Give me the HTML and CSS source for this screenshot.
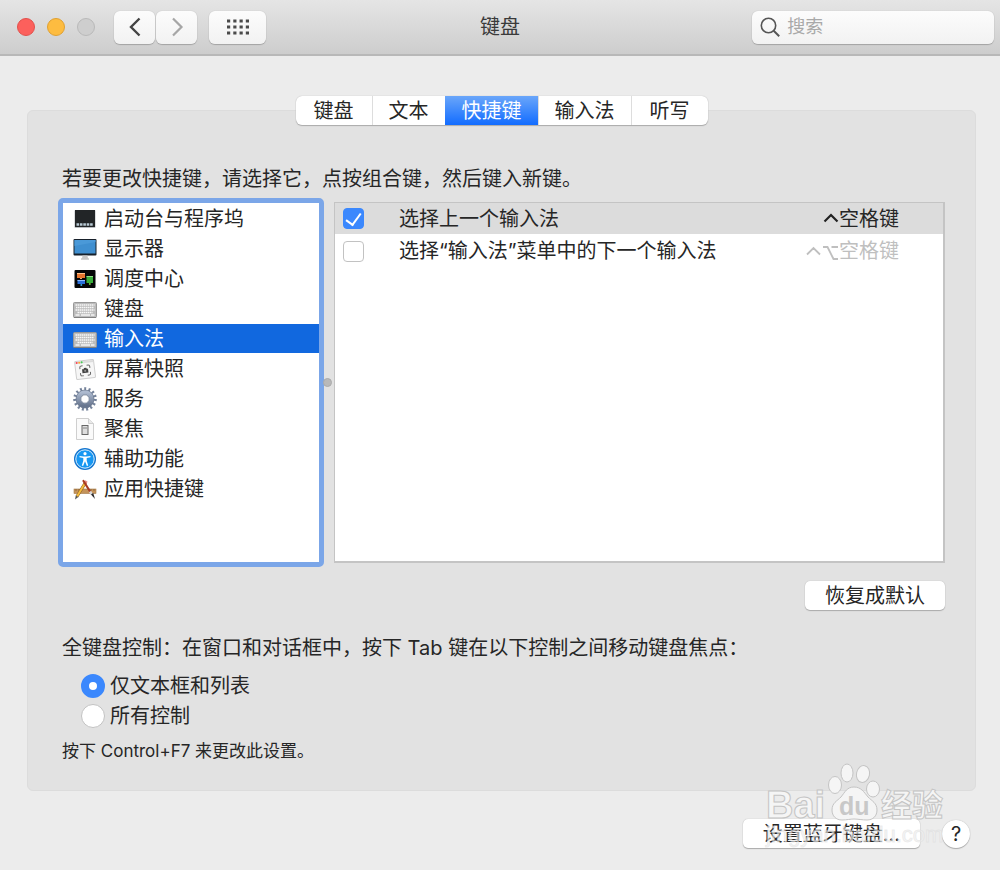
FILE: index.html
```html
<!DOCTYPE html>
<html lang="zh-CN">

<head>
    <meta charset="UTF-8">
    <meta name="viewport" content="width=device-width, initial-scale=1.0">
    <title>键盘</title>
    <link rel="stylesheet" href="styles.css">
</head>

<body>
    <header class="toolbar">
        <div class="toolbar-left">
            <div class="lights">
                <button class="light red" aria-label="关闭"></button>
                <button class="light yellow" aria-label="最小化"></button>
                <button class="light off" aria-label="缩放" disabled></button>
            </div>
            <div class="nav">
                <button class="tool" aria-label="后退">
                    <svg width="14" height="20" viewBox="0 0 14 20"><path d="M11.500 1.500L3 10l8.500 8.500" fill="none" stroke="#444" stroke-width="2.400"/></svg>
                </button>
                <button class="tool" aria-label="前进">
                    <svg width="14" height="20" viewBox="0 0 14 20"><path d="M3 1.500L11.500 10 3 18.500" fill="none" stroke="#a6a6a6" stroke-width="2.200"/></svg>
                </button>
            </div>
            <button class="tool all" aria-label="显示全部">
                <svg width="22" height="16" viewBox="0 0 22 16"><path d="M0 2h22M0 8h22M0 14h22" stroke="#4a4a4a" stroke-width="3.200" stroke-dasharray="3.200 3.070"/></svg>
            </button>
        </div>
        <h1 class="title">键盘</h1>
        <label class="search">
            <svg width="20" height="20" viewBox="0 0 20 20"><circle cx="8.500" cy="8.500" r="7.200" fill="none" stroke="#555" stroke-width="1.600"/><path d="M13.700 13.700l5.500 5.500" stroke="#555" stroke-width="2"/></svg>
            <input type="text" placeholder="搜索" aria-label="搜索">
        </label>
    </header>

    <main class="content">
        <nav class="tabs">
            <button class="tab">键盘</button>
            <button class="tab">文本</button>
            <button class="tab on">快捷键</button>
            <button class="tab">输入法</button>
            <button class="tab">听写</button>
        </nav>

        <section class="panel">
            <p class="intro">若要更改快捷键，请选择它，点按组合键，然后键入新键。</p>

            <div class="split">
                <ul class="list">
                    <li><button class="item">
                        <svg class="icon" viewBox="0 0 24 24"><rect x="1.500" y="3" width="21" height="18" rx="1" fill="#b8bcc0"/><rect x="2" y="3" width="20" height="17" fill="#222527"/><path d="M3.500 17.500h17" stroke="#b9cad5" stroke-width="2.400" stroke-dasharray="2.600 .8"/></svg>
                        启动台与程序坞
                    </button></li>
                    <li><button class="item">
                        <svg class="icon" viewBox="0 0 24 24"><rect x=".5" y="2" width="23" height="16.500" rx="1" fill="#17202a"/><rect x="1.500" y="3" width="21" height="13.500" fill="#3f8fd0"/><path d="M1.500 3h21v2L1.500 9z" fill="#4a99d8"/><path d="M9.500 18.500h5l.5 3h-6z" fill="#c7c7c7"/><path d="M8 22h8" stroke="#aaa"/></svg>
                        显示器
                    </button></li>
                    <li><button class="item">
                        <svg class="icon" viewBox="0 0 24 24"><rect x="1.500" y="3" width="21" height="18" rx="1" fill="#050607"/><rect x="4" y="6" width="8" height="5" fill="#e5752e"/><path d="M4 6.500h8" stroke="#ffc08a"/><rect x="13.500" y="9" width="6.500" height="7" fill="#38ad39"/><path d="M13.500 9.500H20" stroke="#8fe08a"/><rect x="4.500" y="13" width="7.500" height="4" fill="#2a6ed9"/><path d="M4.500 13.500H12" stroke="#8dbcff"/><path d="M7 11.500h2" stroke="#e8a56b"/><circle cx="8.300" cy="18" r="1" fill="#35a6dd"/><circle cx="16.800" cy="17" r="1" fill="#71c93a"/></svg>
                        调度中心
                    </button></li>
                    <li><button class="item">
                        <svg class="icon" viewBox="0 0 24 24"><use href="#kb"/></svg>
                        键盘
                    </button></li>
                    <li><button class="item on">
                        <svg class="icon" viewBox="0 0 24 24">
                            <g id="kb"><rect x=".5" y="5.500" width="23" height="15" rx="1" fill="#bcbcbc" stroke="#999"/><path d="M1 20.500h22" stroke="#808080"/><path d="M2.500 8h19M2.500 13h19M4.500 15.500h15" stroke="#f8f8f8" stroke-width="1.600" stroke-dasharray="1.500 .5"/><path d="M3 10.500h18" stroke="#f8f8f8" stroke-width="1.600" stroke-dasharray="1.500 .5"/><path d="M2.500 18h4M8 18h9M18 18h3.500" stroke="#f4f4f4" stroke-width="1.400"/></g>
                        </svg>
                        输入法
                    </button></li>
                    <li><button class="item">
                        <svg class="icon" viewBox="0 0 24 24"><g transform="rotate(-7 12 12)"><rect x="2.500" y="3.500" width="19" height="18" rx="1" fill="#f6f6f6" stroke="#cfcfcf"/><path d="M3 5h18" stroke="#dcdcdc" stroke-width="2"/><circle cx="4.500" cy="5" r="1" fill="#f45"/><circle cx="7" cy="5" r="1" fill="#fa3"/><circle cx="9.500" cy="5" r="1" fill="#4c5"/><path d="M7 11.500V10q0-1.500 1.500-1.500H10M14 8.500h1.500Q17 8.500 17 10v1.500M17 15.500V17q0 1.500-1.500 1.500H14M10 18.500H8.500Q7 18.500 7 17v-1.500" fill="none" stroke="#666"/><path d="M9 12h1.500l.7-1h2l.7 1H15v4H9z" fill="#444"/><circle cx="12" cy="13.800" r="1" fill="#999"/></g></svg>
                        屏幕快照
                    </button></li>
                    <li><button class="item">
                        <svg class="icon" viewBox="0 0 24 24">
                            <defs><linearGradient id="steel" x2="0" y2="1"><stop stop-color="#aebbd0"/><stop offset="1" stop-color="#68768f"/></linearGradient></defs>
                            <circle cx="12" cy="12" r="10" fill="none" stroke="#74829a" stroke-width="3.600" stroke-dasharray="1.900 2.288"/><circle cx="12" cy="12" r="6.700" fill="none" stroke="url(#steel)" stroke-width="4.800"/><circle cx="12" cy="12" r="9" fill="none" stroke="#66748b" stroke-width=".7"/><circle cx="12" cy="12" r="4.200" fill="#fff" stroke="#66758b" stroke-width=".8"/>
                        </svg>
                        服务
                    </button></li>
                    <li><button class="item">
                        <svg class="icon" viewBox="0 0 24 24"><path d="M3.500 1.500h12l5 5v16h-17z" fill="#fafafa" stroke="#cfcfcf"/><path d="M15.500 1.500v5h5" fill="#e9e9e9" stroke="#cfcfcf"/><rect x="9" y="8.500" width="6" height="9" fill="#ddd" stroke="#666"/><path d="M10 11h4" stroke="#888"/></svg>
                        聚焦
                    </button></li>
                    <li><button class="item">
                        <svg class="icon" viewBox="0 0 24 24"><circle cx="12" cy="12" r="11" fill="#1375cf"/><circle cx="12" cy="12" r="9.200" fill="#1797f2" stroke="#d9efff"/><circle cx="12" cy="6.700" r="1.600" fill="#fff"/><path d="M6.500 9l4 .6h3l4-.6v1.300l-3.800.8v2.700l1.500 4.700-1.300.5-1.900-4.800-1.900 4.800-1.300-.5 1.500-4.700v-2.700l-3.800-.8z" fill="#fff"/></svg>
                        辅助功能
                    </button></li>
                    <li><button class="item">
                        <svg class="icon" viewBox="0 0 24 24"><rect x="1" y="12" width="22" height="4.500" fill="#c4935a" stroke="#a47a48" stroke-width=".6"/><path d="M3 12v2M6 12v2M18 12v2M21 12v2" stroke="#7b5a34" stroke-width=".7"/><path d="M12.800 5L4 19.500" stroke="#8a5c22" stroke-width="3"/><path d="M12.600 5.200L4 19.500" stroke="#f5bd3e" stroke-width="2"/><path d="M2 22.500l.8-4 2.500 1.600z" fill="#555"/><path d="M12.300 6l1.200-2" stroke="#e88b82" stroke-width="2.600"/><path d="M10.500 4l7.500 12" stroke="#a83b23" stroke-width="2.200" stroke-linecap="round"/><path d="M17 14.500l1.800 2.800" stroke="#d7d7d7" stroke-width="2.600"/><path d="M18 17.500l2.200-1.400 1.800 6z" fill="#29282b"/></svg>
                        应用快捷键
                    </button></li>
                </ul>
                <div class="divider"><span class="grip"></span></div>
                <div class="detail">
                    <table class="keys">
                        <tr class="on">
                            <td class="check"><input type="checkbox" id="prev" checked></td>
                            <td><label for="prev">选择上一个输入法</label></td>
                            <td class="combo"><svg width="16" height="16" viewBox="0 0 16 16"><path d="M1.500 9.500L8 3l6.500 6.500" fill="none" stroke="#222" stroke-width="2.200"/></svg>空格键</td>
                        </tr>
                        <tr>
                            <td class="check"><input type="checkbox" id="next"></td>
                            <td><label for="next">选择“输入法”菜单中的下一个输入法</label></td>
                            <td class="combo dim"><svg width="34" height="16" viewBox="0 0 34 16"><path d="M2 9.500L8.500 3l6.500 6.500M18 2h4.500l6 12H33M26.500 2H33" fill="none" stroke="#bfbfbf" stroke-width="1.800"/></svg>空格键</td>
                        </tr>
                    </table>
                </div>
            </div>

            <div class="restore"><button class="push">恢复成默认</button></div>

            <fieldset class="access">
                <legend>全键盘控制：在窗口和对话框中，按下 Tab 键在以下控制之间移动键盘焦点：</legend>
                <label class="choice"><input type="radio" name="focus" checked>仅文本框和列表</label>
                <label class="choice"><input type="radio" name="focus">所有控制</label>
            </fieldset>
            <p class="hint">按下 Control+F7 来更改此设置。</p>
        </section>

        <footer class="bottom">
            <button class="push">设置蓝牙键盘...</button>
            <button class="help" aria-label="帮助">?</button>
            <svg class="mark" width="190" height="90" viewBox="0 0 190 90">
                <g class="mark-shape">
                    <text class="mark-bai" x="2" y="58">Bai</text>
                    <ellipse cx="71" cy="25" rx="6.500" ry="8.500"/>
                    <ellipse cx="83" cy="13" rx="6" ry="9"/>
                    <ellipse cx="99" cy="14" rx="6.500" ry="8.500" transform="rotate(12 99 14)"/>
                    <ellipse cx="109" cy="29" rx="6.500" ry="8"/>
                    <path d="M90 27c-7 0-9 5-13 10-4 4-9 6-9 13 0 6 4 10 10 10 5 0 8-1 12-1s8 1 13 1c6 0 10-4 10-10 0-7-5-9-9-13-4-5-7-10-14-10z"/>
                    <text class="mark-cn" x="117" y="56">经验</text>
                </g>
                <text class="mark-du" x="75" y="55">du</text>
                <text class="mark-url" x="2" y="82">jingyan.baidu.com</text>
            </svg>
        </footer>
    </main>
</body>

</html>
```

FILE: styles.css
```css
* {
    margin: 0;
    padding: 0;
    box-sizing: border-box;
}
body {
    display: flex;
    flex-direction: column;
    min-height: 100vh;
    background: #ececec;
    color: #262626;
    font: 20px/30px Inter, "Noto Sans CJK SC", sans-serif;
}
button, input {
    font: inherit;
    color: inherit;
    border: none;
    background: none;
}
svg {
    display: block;
    flex: none;
}

/* toolbar */
.toolbar {
    display: grid;
    grid-template-columns: 1fr auto 1fr;
    align-items: center;
    height: 56px;
    padding: 0 6px;
    background: linear-gradient(#e5e5e5, #cdcdcd);
    border-bottom: 2px solid #b8b8b8;
}
.toolbar-left {
    display: flex;
    align-items: center;
    padding-left: 11px;
}
.lights {
    display: flex;
    gap: 12px;
    margin-right: 19px;
}
.light {
    width: 18px;
    height: 18px;
    border-radius: 50%;
    border: 1px solid #b9b9b9;
}
.red {
    background: #fc605c;
    border-color: #e2504b;
}
.yellow {
    background: #fdbc40;
    border-color: #e0a030;
}
.off {
    background: #cecece;
}
.nav {
    display: flex;
    gap: 1px;
    margin-right: 12px;
}
.tool, .search {
    display: flex;
    align-items: center;
    justify-content: center;
    height: 33px;
    border-radius: 6px;
    background: linear-gradient(#fcfcfc, #f2f2f2);
    box-shadow: 0 1px 1px #a4a4a4, 0 0 1px #aaa;
}
.tool {
    width: 41px;
}
.all {
    width: 57px;
}
.title {
    font-size: 20px;
    font-weight: 400;
    color: #3a3a3a;
}
.search {
    justify-self: end;
    justify-content: flex-start;
    gap: 7px;
    width: 51%;
    padding-left: 8px;
}
.search input {
    flex: 1;
    min-width: 0;
    height: 30px;
    font-size: 18px;
    outline: none;
}
.search input::placeholder {
    color: #a9a9a9;
}

/* tabs */
.content {
    padding: 40px 24px 20px 27px;
}
.tabs {
    position: relative;
    z-index: 1;
    display: flex;
    width: max-content;
    margin: 0 auto;
    height: 29px;
    border-radius: 6px;
    background: #fff;
    box-shadow: 0 1px 1px #aaa, 0 0 1px #aaa;
}
.tab {
    padding: 0 16px;
    line-height: 28px;
    border-left: 1px solid #ddd;
}
.tab:first-child, .tab:last-child {
    padding: 0 18px;
}
.tab:first-child {
    border-left: none;
}
.tab.on {
    color: #fff;
    border-color: transparent;
    background: linear-gradient(#6aa6fa, #126cff) border-box;
}

/* panel */
.panel {
    margin-top: -15px;
    padding: 53px 30px 24px 30px;
    background: #e2e2e2;
    border: 1px solid #dcdcdc;
    border-radius: 6px;
}
.intro {
    padding-left: 4px;
}
.split {
    display: flex;
    margin-top: 4px;
}
.list {
    flex: 0 1 266px;
    height: 369px;
    padding-top: 1px;
    list-style: none;
    background: #fff;
    border: 5px solid #7ba6e8;
    border-radius: 5px;
}
.item {
    display: flex;
    align-items: center;
    gap: 7px;
    width: 100%;
    height: 29px;
    margin-bottom: 1px;
    padding-left: 10px;
    line-height: 28px;
    text-align: left;
}
.item.on {
    color: #fff;
    background: #1168df;
}
.icon {
    width: 24px;
    height: 24px;
}
.divider {
    display: flex;
    align-items: center;
    justify-content: center;
    width: 10px;
}
.grip {
    flex: none;
    width: 9px;
    height: 9px;
    margin-right: 4px;
    border-radius: 50%;
    background: #b9b9b9;
    border: 1px solid #aaa;
}
.detail {
    flex: 1;
    margin: 4px 0;
    background: #fff;
    border: 2px solid #c4c4c4;
    border-width: 1px 2px 2px 1px;
}
.keys {
    width: 100%;
    border-collapse: collapse;
}
.keys tr {
    height: 34px;
}
.keys .on {
    height: 31px;
    background: #dcdcdc;
}
.keys td {
    vertical-align: middle;
}
.check {
    width: 64px;
    padding-left: 8px;
}
.keys .combo {
    padding-right: 44px;
    text-align: right;
}
.combo svg {
    display: inline-block;
    vertical-align: middle;
}
.dim {
    color: #bfbfbf;
}
input[type="checkbox"], input[type="radio"] {
    appearance: none;
    display: block;
    width: 21px;
    height: 21px;
    background: #fff;
    border: 1px solid #c2c2c2;
    border-radius: 4px;
}
input[type="checkbox"]:checked {
    display: grid;
    place-items: center;
    background: #3b88fd;
    border-color: #3b88fd;
}
input[type="checkbox"]:checked::after {
    content: "";
    width: 7px;
    height: 13px;
    margin-bottom: 3px;
    border: solid #fff;
    border-width: 0 2px 2px 0;
    transform: rotate(36deg);
}

/* push buttons */
.restore {
    display: flex;
    justify-content: flex-end;
    margin-top: 14px;
}
.push {
    height: 29px;
    padding: 0 20px;
    line-height: 28px;
    border-radius: 5px;
    background: #fff;
    box-shadow: 0 1px 1px #aaa, 0 0 1px #aaa;
}

/* full keyboard access */
.access {
    margin-top: 23px;
    padding-left: 4px;
    border: none;
}
.access legend {
    margin-bottom: 8px;
}
.choice {
    display: flex;
    align-items: center;
    gap: 5px;
    width: max-content;
    margin-left: 19px;
}
.choice input[type="radio"] {
    width: 24px;
    height: 24px;
    border-radius: 50%;
}
.choice input[type="radio"]:checked {
    border: 8px solid #3b88fd;
}
.hint {
    margin-top: 5px;
    padding-left: 4px;
    font-size: 17px;
}

/* bottom row */
.bottom {
    position: relative;
    display: flex;
    align-items: center;
    justify-content: flex-end;
    gap: 22px;
    margin-top: 28px;
    padding-right: 6px;
}
.help {
    width: 28px;
    height: 28px;
    line-height: 28px;
    border-radius: 50%;
    background: #fff;
    box-shadow: 0 1px 1px #aaa, 0 0 1px #aaa;
}
.mark {
    position: absolute;
    right: 22px;
    bottom: -2px;
    pointer-events: none;
}
.mark-shape {
    fill: #f5f5f5;
    stroke: #c4c4c4;
    stroke-width: 1px;
}
.mark-bai {
    font: bold 38px "Liberation Sans", sans-serif;
}
.mark-cn {
    font: bold 31px "Noto Sans CJK SC", sans-serif;
}
.mark-du {
    font: bold 25px "Liberation Sans", sans-serif;
    fill: #c8c8c8;
}
.mark-url {
    font: 22px "Liberation Sans", sans-serif;
    fill: #f3f3f3;
    fill-opacity: 0.6;
    stroke: #d4d4d4;
    stroke-opacity: 0.4;
}
```
